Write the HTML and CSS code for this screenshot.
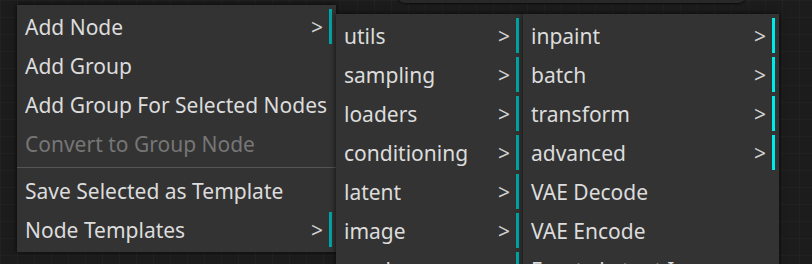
FILE: index.html
```html
<!DOCTYPE html>
<html>
<head>
<meta charset="utf-8">
<link rel="stylesheet" href="styles.css">
</head>
<body>
<div class="canvas">
  <div class="topbar"></div>

  <div class="menu menu-1">
    <div class="entry sub"><span>Add Node</span><span class="arrow">&gt;</span></div>
    <div class="entry"><span>Add Group</span></div>
    <div class="entry"><span>Add Group For Selected Nodes</span></div>
    <div class="entry disabled"><span>Convert to Group Node</span></div>
    <div class="separator"></div>
    <div class="entry"><span>Save Selected as Template</span></div>
    <div class="entry sub"><span>Node Templates</span><span class="arrow">&gt;</span></div>
  </div>

  <div class="menu menu-2">
    <div class="entry sub"><span>utils</span><span class="arrow">&gt;</span></div>
    <div class="entry sub"><span>sampling</span><span class="arrow">&gt;</span></div>
    <div class="entry sub"><span>loaders</span><span class="arrow">&gt;</span></div>
    <div class="entry sub"><span>conditioning</span><span class="arrow">&gt;</span></div>
    <div class="entry sub"><span>latent</span><span class="arrow">&gt;</span></div>
    <div class="entry sub"><span>image</span><span class="arrow">&gt;</span></div>
    <div class="entry sub"><span>mask</span><span class="arrow">&gt;</span></div>
  </div>

  <div class="menu menu-3">
    <div class="entry sub"><span>inpaint</span><span class="arrow">&gt;</span></div>
    <div class="entry sub"><span>batch</span><span class="arrow">&gt;</span></div>
    <div class="entry sub"><span>transform</span><span class="arrow">&gt;</span></div>
    <div class="entry sub"><span>advanced</span><span class="arrow">&gt;</span></div>
    <div class="entry"><span>VAE Decode</span></div>
    <div class="entry"><span>VAE Encode</span></div>
    <div class="entry"><span>Empty Latent Image</span></div>
  </div>
</div>
</body>
</html>
```
FILE: styles.css
```css
html, body {
  margin: 0;
  padding: 0;
  width: 812px;
  height: 264px;
  overflow: hidden;
  background: #1c1c1c;
}

.canvas {
  position: relative;
  width: 812px;
  height: 264px;
  overflow: hidden;
  background-color: #1c1c1c;
  background-image:
    linear-gradient(to bottom, rgba(255,255,255,0.025) 1px, transparent 1px),
    linear-gradient(to right, rgba(255,255,255,0.025) 1px, transparent 1px);
  background-size: 17px 17px;
  font-family: "Noto Sans", "Open Sans", sans-serif;
}

.topbar {
  position: absolute;
  left: 397px;
  top: -20px;
  width: 349px;
  height: 23px;
  background: #282828;
  border-radius: 8px;
  box-shadow: 0 1px 2px rgba(0,0,0,0.6);
}

.menu {
  position: absolute;
  box-sizing: border-box;
  background: #333333;
  padding: 4px 4px 4px 4px;
  display: flex;
  flex-direction: column;
  gap: 4px;
  box-shadow: 0 0 6px rgba(0,0,0,0.75);
  color: #dcdcdc;
  font-size: 21px;
}

.menu-1 {
  left: 17px;
  top: 5px;
  width: 319px;
  height: 247px;
}

.menu-2 {
  left: 336px;
  top: 14px;
  width: 187px;
  height: 290px;
}

.menu-3 {
  left: 523px;
  top: 14px;
  width: 256px;
  height: 290px;
}

.entry {
  height: 35px;
  display: flex;
  align-items: center;
  padding-left: 4px;
  padding-right: 6px;
  border-right: 3px solid transparent;
  white-space: nowrap;
}

.menu-1 .entry.sub,
.menu-2 .entry.sub {
  border-right-color: #00a6a6;
}

.menu-3 .entry.sub {
  border-right-color: #00eaea;
}

.arrow {
  margin-left: auto;
  color: #d0d0d0;
}

.disabled {
  color: #767676;
}

.separator {
  height: 1px;
  background: #555555;
  margin: 2px -4px 1px -4px;
}
```
